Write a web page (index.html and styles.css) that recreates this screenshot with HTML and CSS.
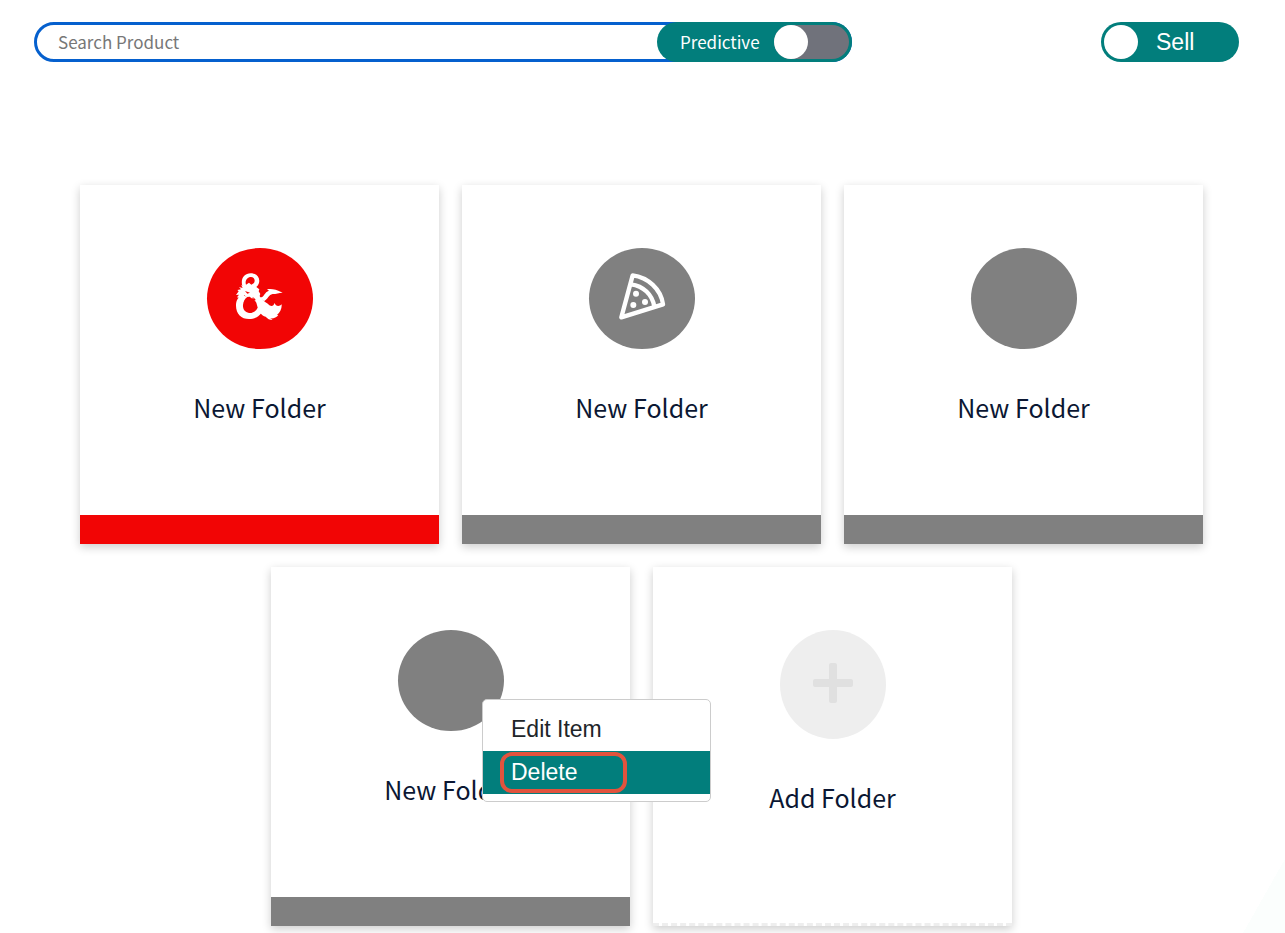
FILE: index.html
```html
<!DOCTYPE html>
<html lang="en">
<head>
    <meta charset="UTF-8">
    <meta name="viewport" content="width=device-width, initial-scale=1.0">
    <title>Products</title>
    <link rel="stylesheet" href="styles.css">
</head>
<body>

    <!-- Search and mode switches -->
    <header class="topbar">
        <div class="search">
            <input type="text" class="search-input" placeholder="Search Product" aria-label="Search Product">
            <label class="predictive">Predictive <input type="checkbox" class="predictive-switch"></label>
        </div>
        <label class="sell"><input type="checkbox" class="sell-switch"> Sell</label>
    </header>

    <!-- Folders -->
    <main class="folders">
        <div class="folder folder-red">
            <div class="folder-icon">
                <svg width="48" height="48" viewBox="11 9 144 144" fill="#fff">
                    <!-- curled neck and head -->
                    <path fill-rule="evenodd" d="M30 48 C24 26 36 10 55 10 C74 10 84 24 80 39 C78 45 75 48 72 51 L81 58 L79 64 L84 72 L80 82 L70 84 L62 79 L60 86 L52 80 L43 81 L36 76 L28 86 L14 82 L20 74 L11 75 L19 64 L15 60 L26 58 L20 51 L31 54 L26 44 Z M41 44 L50 38 L57 44 L65 39 C70 30 65 21 56 21 C44 21 37 33 41 44 Z"/>
                    <!-- body -->
                    <path d="M28 76 C15 84 11 94 11 107 C11 131 27 147 50 147 C66 147 79 140 88 128 L76 113 C71 124 60 130 50 129 C37 127 31 117 32 105 C33 93 37 86 46 80 Z"/>
                    <!-- tail -->
                    <path d="M58 78 L80 74 C86 90 99 94 108 103 C115 111 125 109 126 99 L131 106 C137 110 143 108 148 103 C149 116 143 127 134 135 L138 135 C133 143 123 146 114 145 L121 150 C112 150 105 146 100 140 C87 137 81 125 77 116 L72 98 Z"/>
                    <!-- wing -->
                    <path d="M80 82 C96 85 95 66 110 62 L104 58 C118 56 130 58 151 68 C139 68 132 72 121 72 C109 74 107 87 95 94 Z"/>
                    <path d="M38 63 l15 5 -8 3z M63 81 l8 10 -7 -1z" fill="#f20505"/>
                </svg>
            </div>
            <div class="folder-name">New Folder</div>
        </div>

        <div class="folder">
            <div class="folder-icon">
                <svg width="48" height="48" viewBox="0 0 144 144" fill="none" stroke="#fff" stroke-width="13" stroke-linejoin="round">
                    <path d="M44 7 C90 13 129 48 135 94 L10 133 Z"/>
                    <path d="M39 34 C76 39 103 64 109 101"/>
                    <g fill="#fff" stroke="none">
                        <circle cx="54" cy="62" r="9"/>
                        <circle cx="81" cy="87" r="9"/>
                        <circle cx="46" cy="96" r="9"/>
                    </g>
                </svg>
            </div>
            <div class="folder-name">New Folder</div>
        </div>

        <div class="folder">
            <div class="folder-icon"></div>
            <div class="folder-name">New Folder</div>
        </div>

        <div class="folder">
            <div class="folder-icon"></div>
            <div class="folder-name">New Folder</div>
            <div class="context-menu">
                <button type="button" class="menu-item">Edit Item</button>
                <button type="button" class="menu-item active">Delete</button>
            </div>
        </div>

        <div class="folder folder-add">
            <div class="folder-icon">
                <svg width="40" height="40" viewBox="0 0 40 40" fill="#e0e0e0">
                    <rect x="16" width="8" height="40" rx="2"/>
                    <rect y="16" width="40" height="8" rx="2"/>
                </svg>
            </div>
            <div class="folder-name">Add Folder</div>
        </div>
    </main>

</body>
</html>
```
FILE: styles.css
```css
*, *::before, *::after {box-sizing: border-box;}
body {
    margin: 0;
    min-height: 100vh;
    font-family: "Noto Sans CJK SC", "Noto Sans", sans-serif;
    color: #0b1733;
    background: linear-gradient(to bottom right, transparent 50%, #fbfefd 50%) no-repeat right bottom / 42px 74px #fff;
}

.topbar {display: flex;justify-content: space-between;padding: 22px 46px 0 34px;}
.search {display: flex;flex: 0 1 818px;height: 40px;border: 3px solid #0560ce;border-radius: 20px;}
.search-input {flex: 1;min-width: 0;padding: 0 21px 2px;border: none;outline: none;background: none;font-family: inherit;font-size: 17px;color: #0b1733;}
.search-input::placeholder {color: #777;opacity: 1;}
.predictive {display: flex;align-items: center;justify-content: space-between;width: 195px;margin: -3px;padding: 0 3px 0 23px;border-radius: 20px;background-color: #027e7c;color: #fff;font-size: 17px;line-height: 34px;}
.predictive-switch {appearance: none;width: 75px;height: 34px;margin: 0;border-radius: 17px;background-color: #70727b;}
.predictive-switch::before {content: "";display: block;width: 34px;height: 34px;border-radius: 50%;background-color: #fff;}
.predictive-switch:checked::before {margin-left: auto;}
.sell {display: flex;align-items: center;gap: 18px;width: 138px;height: 40px;padding: 0 3px;border-radius: 20px;background-color: #027e7c;color: #fff;font-family: "Liberation Sans", Arial, sans-serif;font-size: 23px;}
.sell-switch {appearance: none;width: 34px;height: 34px;margin: 0;border-radius: 50%;background-color: #fff;}

.folders {display: flex;flex-wrap: wrap;justify-content: center;gap: 23px;padding: 123px 82px 7px 80px;}
.folder {position: relative;display: flex;flex-direction: column;align-items: center;width: 359px;height: 359px;padding-top: 63px;border-bottom: 29px solid #808080;background-color: #fff;box-shadow: 0 3px 9px rgba(0, 0, 0, 0.2);}
.folder-icon {display: flex;align-items: center;justify-content: center;width: 106px;height: 101px;margin-bottom: 38px;padding-bottom: 3px;border-radius: 50%;background-color: #808080;}
.folder-name {font-size: 25px;line-height: 40px;}
.folder-red {border-bottom-color: #f20505;}
.folder-red .folder-icon {background-color: #f20505;}
.folder-add {border-bottom: 3px dashed #eee;}
.folder-add .folder-icon {height: 109px;background-color: #eee;}

/* right-click menu over the folder */
.context-menu {position: absolute;top: 132px;left: 211px;z-index: 1;width: 229px;padding: 8px 0 7px;border: 1px solid #ccc;border-radius: 5px;background-color: #fff;}
.menu-item {position: relative;display: block;width: 100%;height: 43px;padding: 0 28px;border: none;background: none;color: #212529;font-family: "Liberation Sans", Arial, sans-serif;font-size: 23px;text-align: left;}
.menu-item.active {background-color: #027e7c;color: #fff;}
.menu-item.active::after {content: "";position: absolute;top: 1px;left: 17px;width: 127px;height: 41px;border: 4px solid #e2533d;border-radius: 12px;}
```
